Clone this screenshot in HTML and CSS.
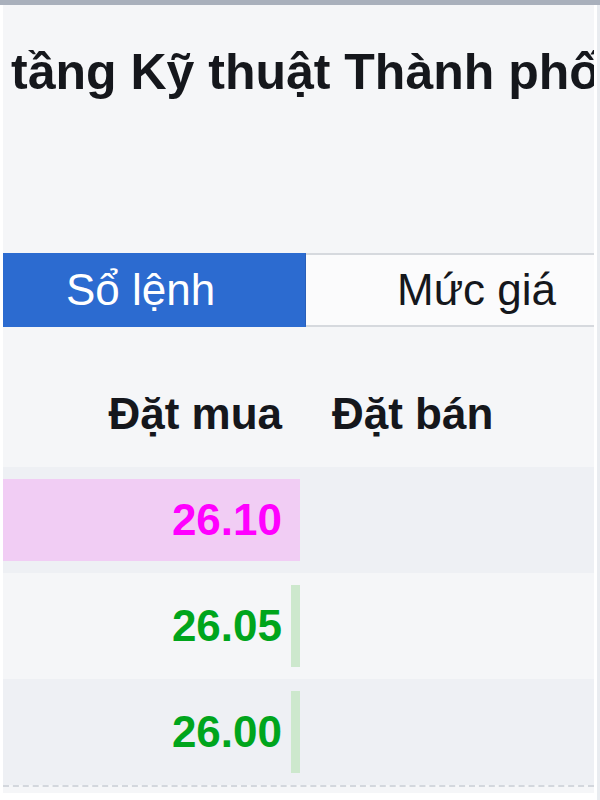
FILE: index.html
```html
<!DOCTYPE html>
<html lang="vi">
<head>
    <meta charset="UTF-8">
    <meta name="viewport" content="width=device-width, initial-scale=1.0">
    <title>Sổ lệnh</title>
    <link rel="stylesheet" href="styles.css">
</head>
<body>

    <div class="topbar"></div>

    <div class="page">
        <!-- Tên công ty -->
        <h1 class="title">tầng Kỹ thuật Thành phố</h1>

        <!-- Tabs -->
        <div class="tabs">
            <div class="tab active">Sổ lệnh</div>
            <div class="tab">Mức giá</div>
        </div>

        <!-- Bảng sổ lệnh -->
        <div class="book">
            <div class="book-head">
                <div class="col buy">Đặt mua</div>
                <div class="col sell">Đặt bán</div>
            </div>

            <div class="book-row alt">
                <div class="col buy">
                    <span class="vol ceil-bg" style="width: 100%"></span>
                    <span class="price ceil">26.10</span>
                </div>
                <div class="col sell"></div>
            </div>

            <div class="book-row">
                <div class="col buy">
                    <span class="vol up-bg" style="width: 9px"></span>
                    <span class="price up">26.05</span>
                </div>
                <div class="col sell"></div>
            </div>

            <div class="book-row alt">
                <div class="col buy">
                    <span class="vol up-bg" style="width: 9px"></span>
                    <span class="price up">26.00</span>
                </div>
                <div class="col sell"></div>
            </div>
        </div>

        <div class="foot"></div>
    </div>

</body>
</html>
```

FILE: styles.css
```css
/* Estilos generales */
body {
    margin: 0;
    padding: 0;
    font-family: "Liberation Sans", Arial, sans-serif;
    background-color: #e9ecf0;
    color: #15171c;
}

.topbar {
    height: 5px;
    background-color: #a9b0bc;
}

.page {
    background-color: #f5f6f8;
    border-left: 3px solid #fff;
    border-right: 3px solid #fff;
    margin-right: 3px;
    overflow: hidden;
}

/* Titulo */
.title {
    margin: 0;
    padding: 37px 0 0 8px;
    height: 248px;
    box-sizing: border-box;
    font-size: 50px;
    line-height: 60px;
    font-weight: bold;
    white-space: nowrap;
}

/* Tabs */
.tabs {
    display: flex;
    height: 74px;
}

.tab {
    flex: 1;
    display: flex;
    align-items: center;
    font-size: 44px;
    color: #15171c;
    background-color: #fbfbfc;
    border-top: 2px solid #d6d9de;
    border-bottom: 2px solid #d6d9de;
    padding-left: 91px;
    white-space: nowrap;
}

.tab.active {
    flex: 0 0 303px;
    box-sizing: border-box;
    justify-content: center;
    padding-left: 0;
    padding-right: 27px;
    background-color: #2c6bd0;
    color: #fff;
    border-color: #2c6bd0;
    border-right: 1px solid #2a5fb8;
}

/* Sổ lệnh */
.book {
    border-bottom: 2px dashed #d3d7dd;
}

.book-head {
    display: flex;
    align-items: flex-end;
    height: 140px;
    box-sizing: border-box;
    padding-bottom: 28px;
    font-size: 44px;
    line-height: 50px;
    font-weight: bold;
}

.col {
    flex: 1;
}

.col.buy {
    flex: 0 0 297px;
    text-align: right;
    padding-right: 18px;
    box-sizing: border-box;
}

.col.sell {
    padding-left: 32px;
}

.book-row {
    display: flex;
    height: 106px;
}

.book-row.alt {
    background-color: #eef0f4;
}

.book-row .col.buy {
    position: relative;
    display: flex;
    align-items: center;
    justify-content: flex-end;
}

.vol {
    position: absolute;
    right: 0;
    top: 12px;
    bottom: 12px;
}

.ceil-bg {
    background-color: #f1cdf4;
}

.up-bg {
    background-color: #cde8cd;
}

.price {
    position: relative;
    font-size: 44px;
    font-weight: bold;
}

.ceil {
    color: #ff00ff;
}

.up {
    color: #00a51c;
}

.foot {
    height: 6px;
    background-color: #f5f6f8;
    border-bottom: 10px solid #fff;
}
```
